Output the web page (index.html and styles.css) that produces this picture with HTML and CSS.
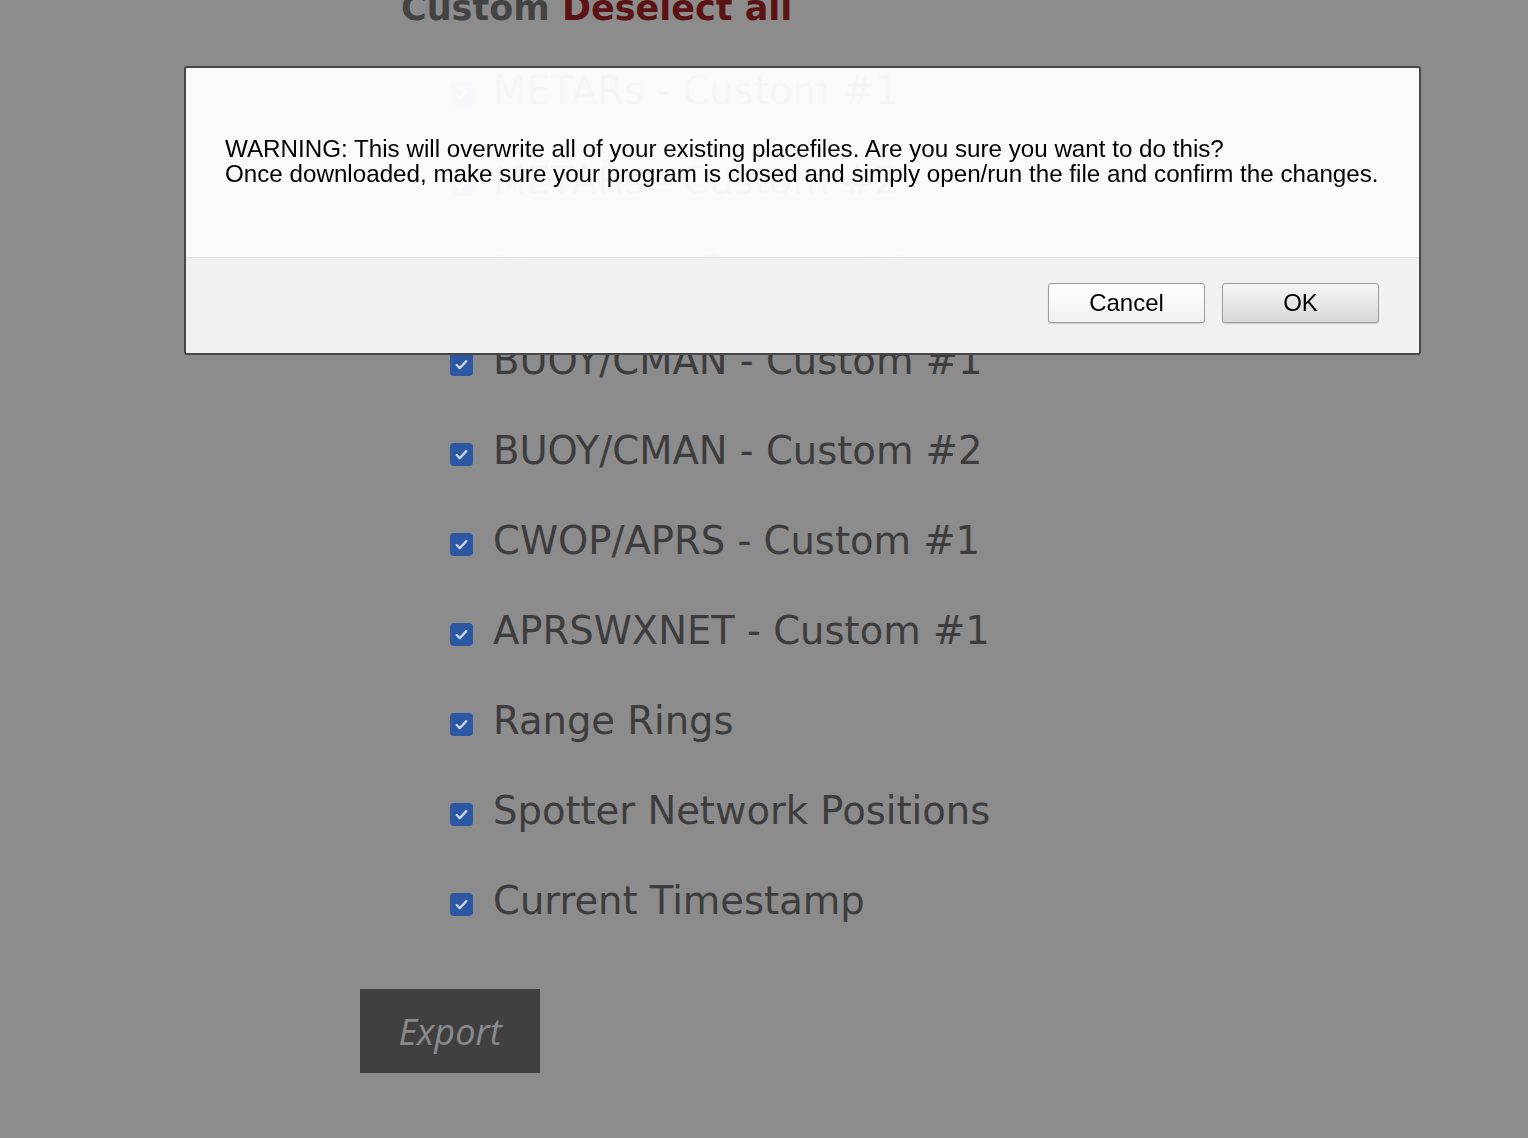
FILE: index.html
```html
<!DOCTYPE html>
<html lang="en">

<head>
  <meta charset="UTF-8">
  <meta name="viewport" content="width=device-width, initial-scale=1.0">
  <title>Placefile Export</title>
  <link rel="stylesheet" href="styles.css">
</head>

<body>
  <main class="page">
    <h2 class="select-head">Custom <a href="#" class="deselect">Deselect all</a></h2>

    <ul class="layer-list">
      <li><span class="check"><svg viewBox="0 0 24 24"><path d="M7 12.5l3.2 3.3L17 8.5"/></svg></span>METARs - Custom #1</li>
      <li><span class="check"><svg viewBox="0 0 24 24"><path d="M7 12.5l3.2 3.3L17 8.5"/></svg></span>METARs - Custom #2</li>
      <li><span class="check"><svg viewBox="0 0 24 24"><path d="M7 12.5l3.2 3.3L17 8.5"/></svg></span>Mesonet - Custom #1</li>
      <li><span class="check"><svg viewBox="0 0 24 24"><path d="M7 12.5l3.2 3.3L17 8.5"/></svg></span>BUOY/CMAN - Custom #1</li>
      <li><span class="check"><svg viewBox="0 0 24 24"><path d="M7 12.5l3.2 3.3L17 8.5"/></svg></span>BUOY/CMAN - Custom #2</li>
      <li><span class="check"><svg viewBox="0 0 24 24"><path d="M7 12.5l3.2 3.3L17 8.5"/></svg></span>CWOP/APRS - Custom #1</li>
      <li><span class="check"><svg viewBox="0 0 24 24"><path d="M7 12.5l3.2 3.3L17 8.5"/></svg></span>APRSWXNET - Custom #1</li>
      <li><span class="check"><svg viewBox="0 0 24 24"><path d="M7 12.5l3.2 3.3L17 8.5"/></svg></span>Range Rings</li>
      <li><span class="check"><svg viewBox="0 0 24 24"><path d="M7 12.5l3.2 3.3L17 8.5"/></svg></span>Spotter Network Positions</li>
      <li><span class="check"><svg viewBox="0 0 24 24"><path d="M7 12.5l3.2 3.3L17 8.5"/></svg></span>Current Timestamp</li>
    </ul>

    <button class="export">Export</button>
  </main>

  <div class="modal">
    <div class="modal-body">
      <p>WARNING: This will overwrite all of your existing placefiles. Are you sure you want to do this?<br>
        Once downloaded, make sure your program is closed and simply open/run the file and confirm the changes.</p>
    </div>
    <div class="modal-foot">
      <button class="btn">Cancel</button>
      <button class="btn btn-ok">OK</button>
    </div>
  </div>
</body>

</html>
```

FILE: styles.css
```css
body {
  margin: 0;
  height: 1138px;
  overflow: hidden;
  background-color: #8c8c8c;
  font-family: "DejaVu Sans", sans-serif;
}

.page {
  padding-left: 360px;
}

.select-head {
  margin: -16px 0 0 41px;
  font-size: 35px;
  line-height: 48px;
  font-weight: bold;
  color: #434343;
}

.deselect {
  color: #5c1313;
  text-decoration: none;
}

.layer-list {
  list-style: none;
  margin: 13px 0 0;
  padding: 0 0 0 90px;
}

.layer-list li {
  display: flex;
  align-items: center;
  height: 90px;
  font-size: 38.5px;
  color: #3d3d3d;
}

.check {
  width: 23px;
  height: 23px;
  margin: 8px 20px 0 0;
  border-radius: 4px;
  background-color: #2c58a3;
  flex: 0 0 auto;
}

.check svg {
  display: block;
  width: 23px;
  height: 23px;
  fill: none;
  stroke: #c9d3e6;
  stroke-width: 2.4;
  stroke-linecap: round;
  stroke-linejoin: round;
}

.export {
  display: block;
  width: 180px;
  height: 84px;
  margin-top: 44px;
  border: none;
  background-color: #404040;
  color: #8a8a8a;
  font-family: "Open Sans", sans-serif;
  font-style: italic;
  font-size: 36px;
}

.modal {
  position: fixed;
  top: 66px;
  left: 184px;
  width: 1233px;
  border: 2px solid #474747;
  border-radius: 3px;
  background-color: rgba(255, 255, 255, 0.957);
  font-family: "Liberation Sans", Arial, sans-serif;
  color: #000;
}

.modal-body {
  height: 189px;
  padding: 0 39px;
  display: flex;
  align-items: center;
}

.modal-body p {
  margin: 0 0 4px;
  font-size: 24.2px;
  line-height: 25px;
}

.modal-foot {
  height: 96px;
  border-top: 1px solid #e2e2e2;
  background-color: rgba(240, 240, 240, 0.96);
  display: flex;
  justify-content: flex-end;
  align-items: center;
  gap: 17px;
  padding: 0 40px 6px 0;
  box-sizing: border-box;
}

.btn {
  width: 157px;
  height: 40px;
  border: 1px solid #9c9c9c;
  border-radius: 3px;
  background: linear-gradient(#ffffff, #f1f1f1);
  box-shadow: 0 1px 1px rgba(0, 0, 0, 0.15);
  font-family: "Liberation Sans", Arial, sans-serif;
  font-size: 24px;
  color: #000;
}

.btn-ok {
  background: linear-gradient(#f6f6f6, #d8d8d8);
}
```
